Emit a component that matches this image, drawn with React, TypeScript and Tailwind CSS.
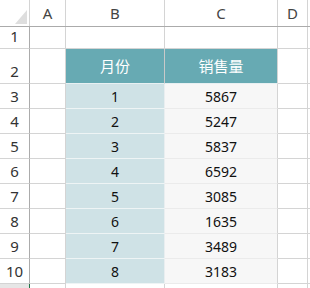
import React from "react";

const data: [string, string][] = [
  ["1", "5867"],
  ["2", "5247"],
  ["3", "5837"],
  ["4", "6592"],
  ["5", "3085"],
  ["6", "1635"],
  ["7", "3489"],
  ["8", "3183"],
];

const font = { fontFamily: '"Noto Sans", "Noto Sans CJK SC", sans-serif' };

function RowHead({ n, h }: { n: string; h: string }) {
  return (
    <div className={`w-[30px] shrink-0 ${h} border-r border-b border-r-[#ababab] border-b-[#d4d4d4] bg-white flex items-end justify-center pb-[1px] text-[15px] leading-none text-[#333]`}>
      <span className="pb-[3px]">{n}</span>
    </div>
  );
}

export default function App() {
  return (
    <div className="w-[310px] h-[288px] overflow-hidden bg-white text-[#222]" style={font}>
      {/* column header */}
      <div className="flex h-[27px] border-b border-[#ababab]">
        <div className="w-[30px] shrink-0 border-r border-[#d4d4d4] relative">
          <svg className="absolute left-[15px] top-[10px]" width="12" height="14" viewBox="0 0 12 14">
            <polygon points="12,0 12,14 0,14" fill="#dedede" />
          </svg>
        </div>
        {[
          ["A", "w-[36px]"],
          ["B", "w-[99px]"],
          ["C", "w-[113px]"],
          ["D", "w-[30px]"],
        ].map(([l, w]) => (
          <div key={l} className={`${w} shrink-0 border-r border-[#d4d4d4] flex items-center justify-center text-[15px] text-[#444]`}>
            {l}
          </div>
        ))}
        <div className="flex-1" />
      </div>

      {/* row 1 */}
      <div className="flex h-[22px]">
        <RowHead n="1" h="h-[22px]" />
        <div className="w-[36px] shrink-0 border-r border-b border-[#d4d4d4]" />
        <div className="w-[99px] shrink-0 border-r border-b border-[#d4d4d4]" />
        <div className="w-[113px] shrink-0 border-r border-b border-[#d4d4d4]" />
        <div className="w-[30px] shrink-0 border-r border-b border-[#d4d4d4]" />
        <div className="flex-1 border-b border-[#d4d4d4]" />
      </div>

      {/* row 2 */}
      <div className="flex h-[35px]">
        <RowHead n="2" h="h-[35px]" />
        <div className="w-[36px] shrink-0 border-r border-b border-[#d4d4d4]" />
        <div className="w-[99px] shrink-0 border-r border-b border-r-[#c9c9c9] border-b-[#e8f0f2] bg-[#67aab3] flex items-center justify-center text-white text-[15px]" style={{ fontFamily: '"Noto Sans CJK SC", sans-serif' }}>
          月份
        </div>
        <div className="w-[113px] shrink-0 border-r border-b border-r-[#d4d4d4] border-b-[#e8f0f2] bg-[#67aab3] flex items-center justify-center text-white text-[15px]" style={{ fontFamily: '"Noto Sans CJK SC", sans-serif' }}>
          销售量
        </div>
        <div className="w-[30px] shrink-0 border-r border-b border-[#d4d4d4]" />
        <div className="flex-1 border-b border-[#d4d4d4]" />
      </div>

      {data.map(([m, v], i) => (
        <div key={i} className="flex h-[25px]">
          <RowHead n={String(i + 3)} h="h-[25px]" />
          <div className="w-[36px] shrink-0 border-r border-b border-[#d4d4d4]" />
          <div className="w-[99px] shrink-0 border-r border-b border-r-[#e9eef0] border-b-[#eef4f5] bg-[#cfe2e6] flex items-center justify-center text-[14px] text-[#111]">
            {m}
          </div>
          <div className="w-[113px] shrink-0 border-r border-b border-r-[#d4d4d4] border-b-[#ebebeb] bg-[#f7f7f7] flex items-center justify-center text-[14px] text-[#111]">
            {v}
          </div>
          <div className="w-[30px] shrink-0 border-r border-b border-[#d4d4d4]" />
          <div className="flex-1 border-b border-[#d4d4d4]" />
        </div>
      ))}

      {/* partial row 11 */}
      <div className="flex h-[10px] border-t border-[#c4c4c4] -mt-px">
        <div className="w-[30px] shrink-0 bg-[#e6e6e6] border-r border-[#217346]" />
        <div className="w-[36px] shrink-0 border-r border-[#d4d4d4]" />
        <div className="w-[99px] shrink-0 border-r border-[#d4d4d4]" />
        <div className="w-[113px] shrink-0 border-r border-[#d4d4d4]" />
        <div className="w-[30px] shrink-0 border-r border-[#d4d4d4]" />
        <div className="flex-1" />
      </div>
    </div>
  );
}
